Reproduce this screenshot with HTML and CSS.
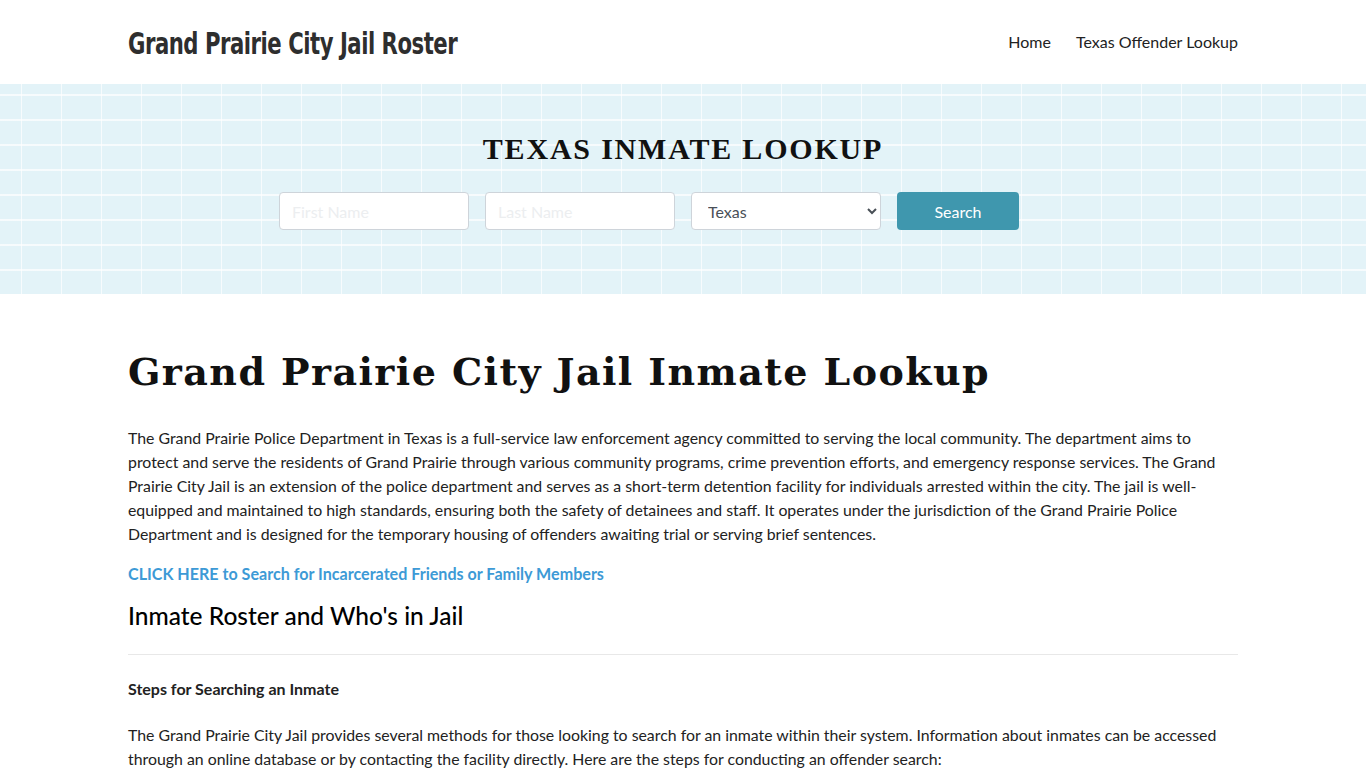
FILE: index.html
```html
<!DOCTYPE html>
<html lang="en">
<head>
<meta charset="utf-8">
<title>Grand Prairie City Jail Roster</title>
<link rel="stylesheet" href="styles.css">
</head>
<body>
<header class="site-header">
  <div class="container header-row">
    <a class="logo" href="#">Grand Prairie City Jail Roster</a>
    <nav class="nav">
      <a href="#">Home</a>
      <a href="#">Texas Offender Lookup</a>
    </nav>
  </div>
</header>
<section class="search-band">
  <h2 class="band-title">TEXAS INMATE LOOKUP</h2>
  <form class="search-form">
    <input class="field" type="text" placeholder="First Name">
    <input class="field" type="text" placeholder="Last Name">
    <select class="field select">
      <option>Texas</option>
    </select>
    <button class="btn" type="button">Search</button>
  </form>
</section>
<main class="container content">
  <h1 class="page-title">Grand Prairie City Jail Inmate Lookup</h1>
  <p>The Grand Prairie Police Department in Texas is a full-service law enforcement agency committed to serving the local community. The department aims to protect and serve the residents of Grand Prairie through various community programs, crime prevention efforts, and emergency response services. The Grand Prairie City Jail is an extension of the police department and serves as a short-term detention facility for individuals arrested within the city. The jail is well-equipped and maintained to high standards, ensuring both the safety of detainees and staff. It operates under the jurisdiction of the Grand Prairie Police Department and is designed for the temporary housing of offenders awaiting trial or serving brief sentences.</p>
  <p class="cta"><a href="#">CLICK HERE to Search for Incarcerated Friends or Family Members</a></p>
  <h2 class="section-title">Inmate Roster and Who's in Jail</h2>
  <hr class="rule">
  <h3 class="sub-title">Steps for Searching an Inmate</h3>
  <p>The Grand Prairie City Jail provides several methods for those looking to search for an inmate within their system. Information about inmates can be accessed through an online database or by contacting the facility directly. Here are the steps for conducting an offender search:</p>
</main>
</body>
</html>
```
FILE: styles.css
```css
* { box-sizing: border-box; }
html, body { margin: 0; padding: 0; }
body {
  font-family: Lato, "Open Sans", Arial, sans-serif;
  font-size: 15.85px;
  line-height: 24px;
  color: #222;
  background: #fff;
}
a { text-decoration: none; }
.container {
  width: 1110px;
  margin: 0 auto;
}
.site-header { height: 84px; background: #fff; }
.header-row {
  height: 84px;
  display: flex;
  align-items: center;
  justify-content: space-between;
}
.logo {
  font-family: "DejaVu Sans", sans-serif;
  font-stretch: condensed;
  font-weight: bold;
  font-size: 30px;
  color: #2e2e2e;
  letter-spacing: -0.6px;
  transform: scaleX(0.785);
  transform-origin: left center;
  white-space: nowrap;
  margin-top: 3px;
}
.nav { display: flex; gap: 25px; }
.nav a { color: #222; font-size: 16px; }
.search-band {
  height: 210px;
  background-color: #e3f3f8;
  background-image:
    repeating-linear-gradient(90deg, transparent 0 21px, rgba(255,255,255,0.7) 21px 22.5px, transparent 22.5px 40px),
    repeating-linear-gradient(0deg, transparent 0 23px, rgba(255,255,255,0.7) 23px 24.5px, transparent 24.5px 25px);
  padding-top: 47px;
}
.band-title {
  margin: 0;
  text-align: center;
  font-family: "Liberation Serif", "Times New Roman", serif;
  font-weight: bold;
  font-size: 30px;
  line-height: 36px;
  letter-spacing: 1.8px;
  color: #111;
}
.search-form {
  margin-top: 25px;
  display: flex;
  justify-content: center;
  gap: 16px;
  padding-right: 68px;
}
.field {
  width: 190px;
  height: 38px;
  border: 1px solid #ced4da;
  border-radius: 4px;
  background: #fff;
  font-family: Lato, sans-serif;
  font-size: 16px;
  padding: 0 12px;
  color: #495057;
}
.field::placeholder { color: #eceef0; }
.select { padding-left: 12px; }
.btn {
  width: 122px;
  height: 38px;
  border: none;
  border-radius: 4px;
  background: #3f97ae;
  color: #fff;
  font-family: Lato, sans-serif;
  font-size: 16px;
}
.content { padding-top: 50px; }
.page-title {
  margin: 0 0 26px;
  font-family: "DejaVu Serif", "Liberation Serif", serif;
  font-weight: bold;
  font-size: 38px;
  line-height: 56px;
  letter-spacing: 1.42px;
  color: #111;
}
.content p { margin: 0 0 16px; }
.cta a { color: #3d9ad6; font-weight: bold; font-size: 16.1px; }
.section-title {
  margin: -1px 0 0;
  font-size: 24.5px;
  line-height: 30px;
  font-weight: 500;
  color: #000;
}
.rule {
  margin: 23px 0 22px;
  border: 0;
  border-top: 1px solid #e8e8e8;
}
.sub-title {
  margin: 0 0 22px;
  font-size: 16px;
  font-weight: bold;
  line-height: 24px;
}
```
